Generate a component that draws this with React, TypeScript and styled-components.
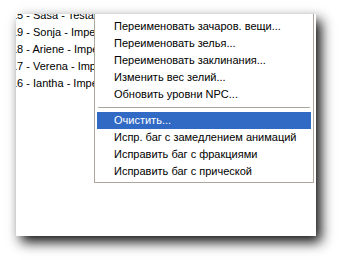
import React from "react";
import styled, {createGlobalStyle} from "styled-components";

const GlobalStyle = createGlobalStyle`
    html, body {
        margin: 0;
        padding: 0;
        background: #ffffff;
    }
    body {
        width: 340px;
        height: 260px;
        overflow: hidden;
        font-family: "Liberation Sans", Arial, sans-serif;
    }
`

const Page = styled.div`
    padding: 14px 0 0 16px;
`

const Sheet = styled.div`
    position: relative;
    width: 300px;
    height: 222px;
    background: #ffffff;
    overflow: hidden;
    box-shadow: 5px 6px 12px rgba(0, 0, 0, 0.95);
`

const List = styled.ul`
    list-style: none;
    margin: -7px 0 0 -5px;
    padding: 0;
`

const Row = styled.li`
    height: 17px;
    line-height: 17px;
    font-size: 11px;
    color: #000;
    white-space: nowrap;
`

const Menu = styled.div`
    position: absolute;
    left: 78px;
    top: -8px;
    width: 220px;
    box-sizing: border-box;
    padding: 11px 2px 2px;
    background: #ffffff;
    border: 1px solid #aca899;
`

const Item = styled.div<{active?: boolean}>`
    height: 17px;
    line-height: 17px;
    padding-left: 17px;
    font-size: 11px;
    white-space: nowrap;
    color: ${(props) => props.active ? "#ffffff" : "#000000"};
    background: ${(props) => props.active ? "#316ac5" : "transparent"};
`

const Separator = styled.div`
    height: 9px;
    display: flex;
    align-items: center;

    &::after {
        content: "";
        flex: 1;
        height: 1px;
        margin: 0 1px;
        background: #aca899;
    }
`

const rows = [
    "15 - Sasa - Testa",
    "19 - Sonja - Imperial",
    "18 - Ariene - Imperial",
    "17 - Verena - Imperial",
    "16 - Iantha - Imperial",
]

const topItems = [
    "Переименовать зачаров. вещи...",
    "Переименовать зелья...",
    "Переименовать заклинания...",
    "Изменить вес зелий...",
    "Обновить уровни NPC...",
]

const bottomItems = [
    "Испр. баг с замедлением анимаций",
    "Исправить баг с фракциями",
    "Исправить баг с прической",
]

export default function App() {
    return (
        <>
            <GlobalStyle/>
            <Page>
                <Sheet>
                    <List>
                        {rows.map((r) => <Row key={r}>{r}</Row>)}
                    </List>
                    <Menu>
                        {topItems.map((t) => <Item key={t}>{t}</Item>)}
                        <Separator/>
                        <Item active>Очистить...</Item>
                        {bottomItems.map((t) => <Item key={t}>{t}</Item>)}
                    </Menu>
                </Sheet>
            </Page>
        </>
    )
}
